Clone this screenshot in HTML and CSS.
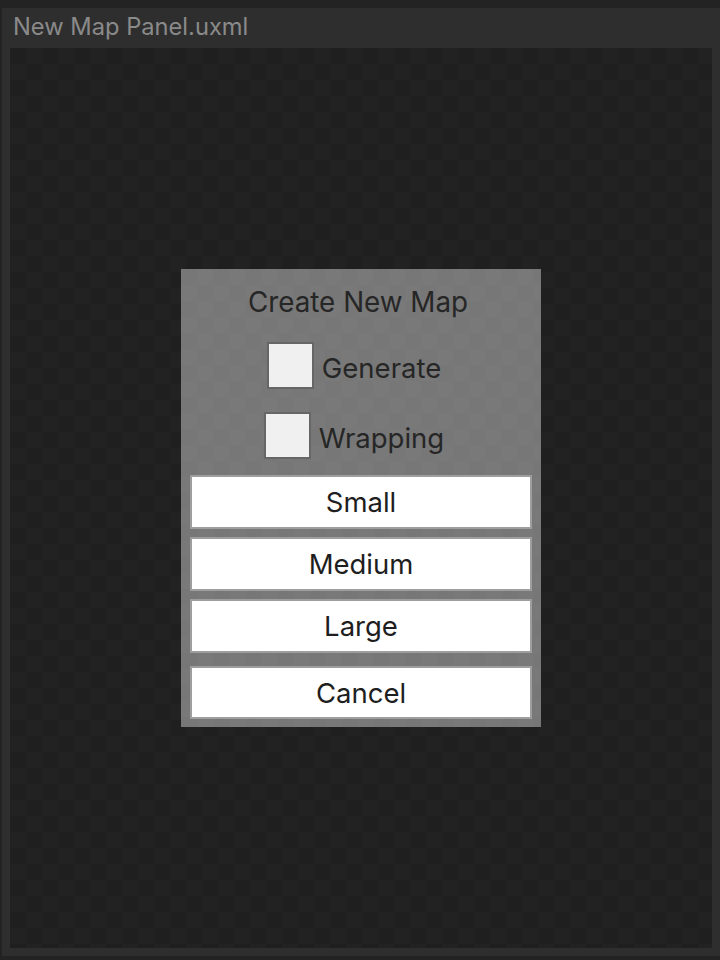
FILE: index.html
```html
<!DOCTYPE html>
<html lang="en">
<head>
    <meta charset="UTF-8">
    <meta name="viewport" content="width=device-width, initial-scale=1.0">
    <title>New Map Panel.uxml</title>
    <link rel="stylesheet" href="styles.css">
</head>
<body>
    <div class="window">
        <div class="title-bar">New Map Panel.uxml</div>
        <div class="canvas">
            <div class="panel">
                <div class="panel-title">Create New Map</div>
                <label class="toggle-row">
                    <span class="toggle-box"></span>
                    <span class="toggle-label">Generate</span>
                </label>
                <label class="toggle-row">
                    <span class="toggle-box"></span>
                    <span class="toggle-label">Wrapping</span>
                </label>
                <div class="size-buttons">
                    <button class="map-button">Small</button>
                    <button class="map-button">Medium</button>
                    <button class="map-button">Large</button>
                </div>
                <button class="map-button cancel">Cancel</button>
            </div>
        </div>
    </div>
</body>
</html>
```

FILE: styles.css
```css
body {
    margin: 0;
    padding: 0;
    background-color: #232323;
    font-family: Inter, "Noto Sans", sans-serif;
    height: 960px;
    overflow: hidden;
}
.window {
    margin: 8px 0 0 2px;
    width: 718px;
    height: 948px;
    background-color: #2e2e2e;
    box-sizing: border-box;
    padding: 0 8px 8px 8px;
    display: flex;
    flex-direction: column;
}
.title-bar {
    height: 40px;
    line-height: 38px;
    padding-left: 3px;
    font-size: 23.7px;
    color: #8a8a8a;
}
.canvas {
    flex: 1;
    background-color: #1f1f1f;
    background-image:
        linear-gradient(45deg, #222222 25%, transparent 25%, transparent 75%, #222222 75%),
        linear-gradient(45deg, #222222 25%, transparent 25%, transparent 75%, #222222 75%);
    background-size: 32px 32px;
    background-position: 0 0, 16px 16px;
    display: flex;
    align-items: center;
    justify-content: center;
}
.panel {
    width: 360px;
    height: 458px;
    box-sizing: border-box;
    padding: 0 9px 8px 9px;
    background-color: #777777;
    background-image:
        linear-gradient(45deg, #797979 25%, transparent 25%, transparent 75%, #797979 75%),
        linear-gradient(45deg, #797979 25%, transparent 25%, transparent 75%, #797979 75%);
    background-size: 32px 32px;
    background-position: 0 0, 16px 16px;
    display: flex;
    flex-direction: column;
}
.panel-title {
    margin-top: 17px;
    height: 32px;
    line-height: 32px;
    text-align: center;
    font-size: 27.8px;
    color: #262626;
    padding-right: 6px;
}
.toggle-row {
    display: flex;
    align-items: center;
    justify-content: center;
    gap: 8px;
    padding-right: 14px;
    margin-top: 23px;
    height: 47px;
}
.toggle-row:first-of-type {
    margin-top: 24px;
}
.toggle-box {
    width: 47px;
    height: 47px;
    box-sizing: border-box;
    border: 2px solid #666666;
    background-color: #f0f0f0;
}
.toggle-label {
    padding-top: 5px;
    font-size: 27.5px;
    color: #262626;
}
.size-buttons {
    margin-top: 16px;
    display: flex;
    flex-direction: column;
    gap: 8px;
}
.map-button {
    display: block;
    width: 100%;
    height: 54px;
    margin: 0;
    padding: 0;
    box-sizing: border-box;
    border: 2px solid #9e9e9e;
    background-color: #ffffff;
    font-family: Inter, "Noto Sans", sans-serif;
    font-size: 27.5px;
    color: #1e1e1e;
}
.cancel {
    margin-top: 13px;
}
```
